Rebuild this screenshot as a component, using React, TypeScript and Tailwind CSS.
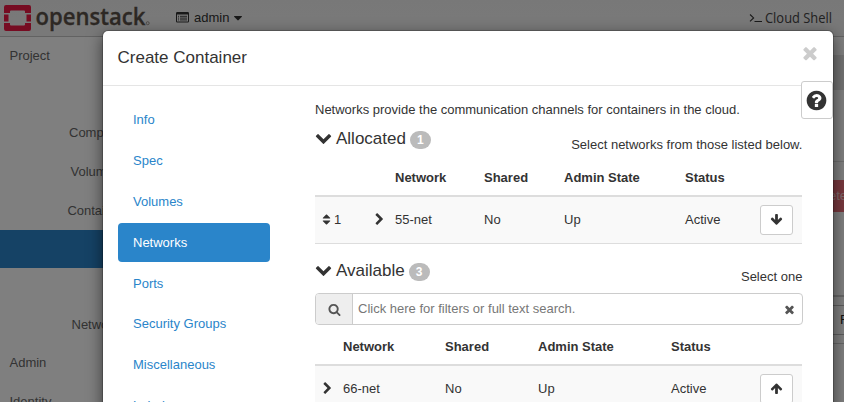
import React from "react";

const ICONS = {
  chevronDown:
    "M1683 808l-742 741q-19 19-45 19t-45-19l-742-741q-19-19-19-45.5t19-45.5l166-165q19-19 45-19t45 19l531 531 531-531q19-19 45-19t45 19l166 165q19 19 19 45.5t-19 45.5z",
  chevronRight:
    "M1363 877l-742 742q-19 19-45 19t-45-19l-166-166q-19-19-19-45t19-45l531-531-531-531q-19-19-19-45t19-45l166-166q19-19 45-19t45 19l742 742q19 19 19 45t-19 45z",
  times:
    "M1490 1322q0 40-28 68l-136 136q-28 28-68 28t-68-28l-294-294-294 294q-28 28-68 28t-68-28l-136-136q-28-28-28-68t28-68l294-294-294-294q-28-28-28-68t28-68l136-136q28-28 68-28t68 28l294 294 294-294q28-28 68-28t68 28l136 136q28 28 28 68t-28 68l-294 294 294 294q28 28 28 68z",
  search:
    "M1216 832q0-185-131.5-316.5t-316.5-131.5-316.5 131.5-131.5 316.5 131.5 316.5 316.5 131.5 316.5-131.5 131.5-316.5zm512 832q0 52-38 90t-90 38q-54 0-90-38l-343-342q-179 124-399 124-143 0-273.5-55.5t-225-150-150-225-55.5-273.5 55.5-273.5 150-225 225-150 273.5-55.5 273.5 55.5 225 150 150 225 55.5 273.5q0 220-124 399l343 343q37 37 37 90z",
  question:
    "M1024 1376v-192q0-14-9-23t-23-9h-192q-14 0-23 9t-9 23v192q0 14 9 23t23 9h192q14 0 23-9t9-23zm256-672q0-88-55.5-163t-138.5-116-170-41q-243 0-371 213-15 24 8 42l132 100q7 6 19 6 16 0 25-12 53-68 86-92 34-24 86-24 48 0 85.5 26t37.5 59q0 38-20 61t-68 45q-63 28-115.5 86.5t-52.5 125.5v36q0 14 9 23t23 9h192q14 0 23-9t9-23q0-19 21.5-49.5t54.5-49.5q32-18 49-28.5t46-35 44.5-48 28-60.5 12.5-81zm384 192q0 209-103 385.5t-279.5 279.5-385.5 103-385.5-103-279.5-279.5-103-385.5 103-385.5 279.5-279.5 385.5-103 385.5 103 279.5 279.5 103 385.5z",
  sort: "M1408 1088q0 26-19 45l-448 448q-19 19-45 19t-45-19l-448-448q-19-19-19-45t19-45 45-19h896q26 0 45 19t19 45zm0-384q0 26-19 45t-45 19h-896q-26 0-45-19t-19-45 19-45l448-448q19-19 45-19t45 19l448 448q19 19 19 45z",
  caretDown:
    "M1408 704q0 26-19 45l-448 448q-19 19-45 19t-45-19l-448-448q-19-19-19-45t19-45 45-19h896q26 0 45 19t19 45z",
  arrowDown:
    "M1675 832q0 53-37 90l-651 652q-39 37-91 37-53 0-90-37l-651-652q-38-36-38-90 0-53 38-91l74-75q39-37 91-37 53 0 90 37l294 294v-704q0-52 38-90t90-38h128q52 0 90 38t38 90v704l294-294q37-37 90-37 52 0 91 37l75 75q37 39 37 91z",
  arrowUp:
    "M1675 971q0 51-37 90l-75 75q-38 38-91 38-54 0-90-38l-294-293v704q0 52-37.5 84.5t-90.5 32.5h-128q-53 0-90.5-32.5t-37.5-84.5v-704l-294 293q-36 38-90 38t-90-38l-75-75q-38-38-38-90 0-53 38-91l651-651q35-37 90-37 54 0 91 37l651 651q37 39 37 91z",
};

function Icon({ name, size, className = "" }: { name: keyof typeof ICONS; size: number; className?: string }) {
  return (
    <svg width={size} height={size} viewBox="0 0 1792 1792" fill="currentColor" className={`shrink-0 ${className}`}>
      <path d={ICONS[name]} />
    </svg>
  );
}

function Logo() {
  return (
    <svg width="152" height="36" viewBox="0 0 152 36" className="shrink-0">
      <g fill="#ed1944">
        <path d="M6 5h23a2 2 0 0 1 2 2v6h-6v-1.5a1 1 0 0 0-1-1H11a1 1 0 0 0-1 1V13H4V7a2 2 0 0 1 2-2z" />
        <path d="M4 14.5h4.500v7H4zM26.500 14.5H31v7h-4.500z" />
        <path d="M4 23h6v1.500a1 1 0 0 0 1 1h13a1 1 0 0 0 1-1V23h6v6a2 2 0 0 1-2 2H6a2 2 0 0 1-2-2z" />
      </g>
      <text x="35.5" y="25" fontFamily="Open Sans" fontWeight="600" fontSize="24" fill="#5b5149" stroke="#5b5149" strokeWidth="0.3" textLength="110" lengthAdjust="spacingAndGlyphs">
        openstack
      </text>
      <circle cx="147.7" cy="23.2" r="1.5" fill="none" stroke="#8a827c" strokeWidth="0.8" />
    </svg>
  );
}

function TopBar() {
  return (
    <header className="flex h-[37px] items-center border-b border-[#c4c4c4] bg-linear-to-b from-[#f1f1f1] to-[#f3f3f3]">
      <Logo />
      <div className="ml-6 flex items-center text-[#333]">
        <svg width="13" height="11" viewBox="0 0 13 11" className="mb-[2px]">
          <path fillRule="evenodd" d="M1.2 0h10.6A1.2 1.2 0 0 1 13 1.2v8.1a1.2 1.2 0 0 1-1.2 1.2H1.2A1.2 1.2 0 0 1 0 9.3V1.2A1.2 1.2 0 0 1 1.2 0zM1 2.600v6.900h11V2.600z" fill="currentColor" />
          <path d="M2 4.300h1M4 4.300h7M2 6.100h1M4 6.100h7M2 7.900h1M4 7.900h7" stroke="currentColor" strokeWidth="0.9" />
        </svg>
        <span className="ml-[5px]">admin</span>
        <Icon name="caretDown" size={14} className="ml-[2px]" />
      </div>
      <svg width="86" height="36" viewBox="0 0 86 36" className="ml-auto mr-[10px] shrink-0">
        <path d="M2 14.500l3.600 3.400L2 21.300M6.500 21.500h7.500" fill="none" stroke="#333" strokeWidth="1.100" />
        <text x="17" y="23" fontFamily="Open Sans" fontWeight="400" fontSize="14.500" fill="#444" textLength="67" lengthAdjust="spacingAndGlyphs">
          Cloud Shell
        </text>
      </svg>
    </header>
  );
}

function Sidebar() {
  return (
    <nav className="flex w-[230px] flex-col text-[#666]">
      <div className="flex h-[38px] items-center pl-[9.500px]">Project</div>
      <div className="mt-[38px] flex h-[39px] items-center pl-[69px]">Compute</div>
      <div className="flex h-[39px] items-center pl-[70.500px]">Volumes</div>
      <div className="flex h-[39px] items-center pl-[67.400px]">Container</div>
      <div className="h-[38px] bg-[#2a85ca]" />
      <div className="mt-[37px] flex h-[39px] items-center pl-[71.500px]">Network</div>
      <div className="flex h-[38px] items-center pl-[9.500px]">Admin</div>
      <div className="flex h-[39px] items-center pl-[9.500px]">Identity</div>
    </nav>
  );
}

function PageContent() {
  return (
    <main className="flex flex-1 flex-col">
      <div className="mt-[18px] h-[35px] bg-[#e4e4e4]" />
      <div className="mt-[71px] h-px bg-[#ddd]" />
      <div className="mt-[18px] flex h-[32px] items-center justify-end bg-[#f0707c] text-white/70">
        <span className="-mr-[3px] whitespace-nowrap">Delete</span>
      </div>
      <div className="mt-[83px] h-[2px] bg-[#ccc]" />
      <div className="mt-[8px] flex h-[30px] items-center justify-end overflow-hidden border-y border-[#bbb] text-[#222]">
        <span className="w-[4px] whitespace-nowrap">Filter</span>
      </div>
      <div className="mt-[8px] h-px bg-[#ccc]" />
    </main>
  );
}

const STEPS = ["Info", "Spec", "Volumes", "Networks", "Ports", "Security Groups", "Miscellaneous", "Labels"];

function StepNav() {
  return (
    <ul className="w-[152px] shrink-0">
      {STEPS.map((step) => (
        <li
          key={step}
          className={`mb-[1.900px] flex h-[38.900px] items-center rounded-[4px] pl-[15px] ${
            step === "Networks" ? "bg-[#2a85ca] text-white" : "text-[#2a85ca]"
          }`}
        >
          {step}
        </li>
      ))}
    </ul>
  );
}

function SectionHeading({ title, count, hint }: { title: string; count: number; hint: string }) {
  return (
    <div className="flex h-[30px] items-start justify-between">
      <h4 className="flex h-[20px] items-center text-[17px]">
        <Icon name="chevronDown" size={17} className="mb-[3px]" />
        <span className="ml-[4px]">{title}</span>
        <span className="ml-[4px] mt-[2px] flex h-[18px] w-[21px] items-center justify-center rounded-[9px] bg-[#bbb] text-xs font-bold text-white">
          {count}
        </span>
      </h4>
      <span className="mr-[0.600px] mt-[7px] leading-[18px]">{hint}</span>
    </div>
  );
}

function MoveButton({ icon }: { icon: "arrowUp" | "arrowDown" }) {
  return (
    <button className="flex h-[30px] w-[33px] items-center justify-center rounded-[3px] border border-[#ccc] bg-white">
      <Icon name={icon} size={13} className="mb-px" />
    </button>
  );
}

function CreateContainerDialog() {
  return (
    <section className="absolute left-[102px] top-[30px] h-[460px] w-[732px] rounded-[6px] border border-black/20 bg-white bg-clip-padding text-[#333] shadow-[0_5px_15px_rgba(0,0,0,0.5)]">
      <div className="flex h-[55px] items-center justify-between border-b border-[#e5e5e5] pl-[14.500px] pr-[13px]">
        <h3 className="text-[17px]">Create Container</h3>
        <Icon name="times" size={20} className="mb-[11px] text-[#ccc]" />
      </div>
      <button className="absolute right-0 top-[50px] flex h-[38px] w-[32px] items-center justify-center rounded-[3px] border border-[#ccc] bg-white pr-px">
        <Icon name="question" size={23} />
      </button>
      <div className="flex pl-[15px] pt-[15px]">
        <StepNav />
        <div className="ml-[45px] w-[488px]">
          <p className="leading-[18px]">Networks provide the communication channels for containers in the cloud.</p>
          <div className="mt-[10px]">
            <SectionHeading title="Allocated" count={1} hint="Select networks from those listed below." />
          </div>
          <div className="w-[487px]">
            <div className="grid h-[38px] grid-cols-[80px_89px_80px_121px_1fr] items-center border-b-2 border-[#ddd] pt-[2px] font-bold">
              <span />
              <span>Network</span>
              <span>Shared</span>
              <span>Admin State</span>
              <span>Status</span>
            </div>
            <div className="grid h-[47px] grid-cols-[58px_22px_89px_80px_121px_75px_1fr] items-center border-b border-[#ddd] bg-[#f9f9f9]">
              <span className="flex items-center pl-[5px]">
                <Icon name="sort" size={13} className="mb-px" />
                <span className="ml-[1px]">1</span>
              </span>
              <Icon name="chevronRight" size={13} className="mb-px" />
              <span>55-net</span>
              <span>No</span>
              <span>Up</span>
              <span>Active</span>
              <MoveButton icon="arrowDown" />
            </div>
          </div>
          <div className="mt-[17px]">
            <SectionHeading title="Available" count={3} hint="Select one" />
          </div>
          <div className="mt-[2px] flex h-[32px] items-stretch rounded-[4px] border border-[#ccc]">
            <span className="flex w-[37px] items-center justify-center rounded-l-[3px] border-r border-[#ccc] bg-[#eee] text-[#555]">
              <Icon name="search" size={13} />
            </span>
            <span className="flex flex-1 items-center pl-[5px] text-[#777]">
              Click here for filters or full text search.
            </span>
            <Icon name="times" size={13} className="mr-[6px] mt-[9px] text-[#555]" />
          </div>
          <div className="w-[487px]">
            <div className="grid h-[41px] grid-cols-[28px_102px_93px_133px_1fr] items-center border-b-2 border-[#ddd] pt-[5px] font-bold">
              <span />
              <span>Network</span>
              <span>Shared</span>
              <span>Admin State</span>
              <span>Status</span>
            </div>
            <div className="grid h-[47px] grid-cols-[28px_102px_93px_133px_89px_1fr] items-center border-b border-[#ddd] bg-[#f9f9f9]">
              <Icon name="chevronRight" size={13} className="mb-px ml-[6px]" />
              <span>66-net</span>
              <span>No</span>
              <span>Up</span>
              <span>Active</span>
              <MoveButton icon="arrowUp" />
            </div>
          </div>
        </div>
      </div>
    </section>
  );
}

export default function App() {
  return (
    <div className="relative h-[402px] w-[844px] overflow-hidden bg-white font-['Liberation_Sans',Arial,sans-serif] text-[13px] leading-[18px]">
      <TopBar />
      <div className="flex">
        <Sidebar />
        <PageContent />
      </div>
      <div className="absolute inset-0 bg-black/50" />
      <CreateContainerDialog />
    </div>
  );
}
